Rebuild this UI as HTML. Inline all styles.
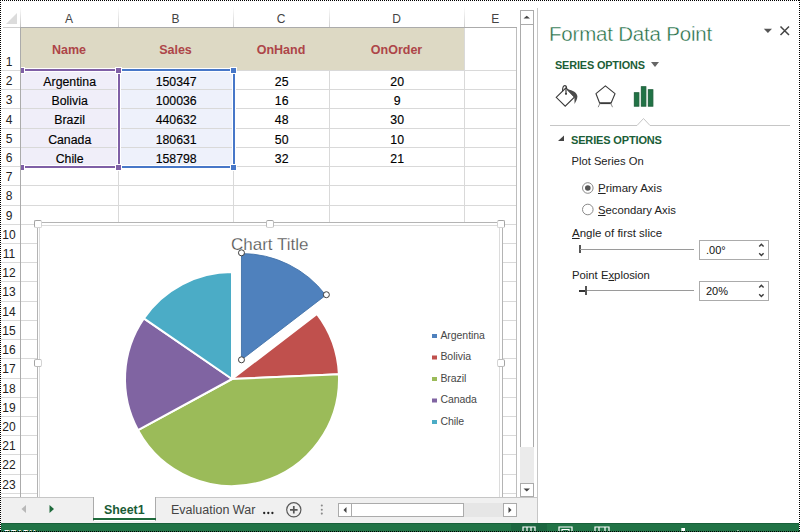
<!DOCTYPE html><html><head><meta charset="utf-8"><style>
*{margin:0;padding:0;box-sizing:border-box}
html,body{width:800px;height:532px;overflow:hidden;background:#fff}
body{position:relative;font-family:"Liberation Sans",sans-serif}
.a{position:absolute}
.t{position:absolute;white-space:nowrap;line-height:1}
</style></head><body>
<div class="a" style="left:21px;top:71px;width:97px;height:95px;background:#f0eef9"></div>
<div class="a" style="left:120px;top:71px;width:113px;height:95px;background:#eef1fb"></div>
<div class="a" style="left:20px;top:70.00px;width:496.0px;height:1px;background:#d9d9d9"></div>
<div class="a" style="left:20px;top:89.22px;width:496.0px;height:1px;background:#d9d9d9"></div>
<div class="a" style="left:20px;top:108.44px;width:496.0px;height:1px;background:#d9d9d9"></div>
<div class="a" style="left:20px;top:127.66px;width:496.0px;height:1px;background:#d9d9d9"></div>
<div class="a" style="left:20px;top:146.88px;width:496.0px;height:1px;background:#d9d9d9"></div>
<div class="a" style="left:20px;top:166.10px;width:496.0px;height:1px;background:#d9d9d9"></div>
<div class="a" style="left:20px;top:185.32px;width:496.0px;height:1px;background:#d9d9d9"></div>
<div class="a" style="left:20px;top:204.54px;width:496.0px;height:1px;background:#d9d9d9"></div>
<div class="a" style="left:20px;top:223.76px;width:496.0px;height:1px;background:#d9d9d9"></div>
<div class="a" style="left:20px;top:242.98px;width:496.0px;height:1px;background:#d9d9d9"></div>
<div class="a" style="left:20px;top:262.20px;width:496.0px;height:1px;background:#d9d9d9"></div>
<div class="a" style="left:20px;top:281.42px;width:496.0px;height:1px;background:#d9d9d9"></div>
<div class="a" style="left:20px;top:300.64px;width:496.0px;height:1px;background:#d9d9d9"></div>
<div class="a" style="left:20px;top:319.86px;width:496.0px;height:1px;background:#d9d9d9"></div>
<div class="a" style="left:20px;top:339.08px;width:496.0px;height:1px;background:#d9d9d9"></div>
<div class="a" style="left:20px;top:358.30px;width:496.0px;height:1px;background:#d9d9d9"></div>
<div class="a" style="left:20px;top:377.52px;width:496.0px;height:1px;background:#d9d9d9"></div>
<div class="a" style="left:20px;top:396.74px;width:496.0px;height:1px;background:#d9d9d9"></div>
<div class="a" style="left:20px;top:415.96px;width:496.0px;height:1px;background:#d9d9d9"></div>
<div class="a" style="left:20px;top:435.18px;width:496.0px;height:1px;background:#d9d9d9"></div>
<div class="a" style="left:20px;top:454.40px;width:496.0px;height:1px;background:#d9d9d9"></div>
<div class="a" style="left:20px;top:473.62px;width:496.0px;height:1px;background:#d9d9d9"></div>
<div class="a" style="left:20px;top:492.84px;width:496.0px;height:1px;background:#d9d9d9"></div>
<div class="a" style="left:118.00px;top:27px;width:1px;height:470px;background:#d9d9d9"></div>
<div class="a" style="left:233.00px;top:27px;width:1px;height:470px;background:#d9d9d9"></div>
<div class="a" style="left:329.00px;top:27px;width:1px;height:470px;background:#d9d9d9"></div>
<div class="a" style="left:464.00px;top:27px;width:1px;height:470px;background:#d9d9d9"></div>
<div class="a" style="left:516.00px;top:27px;width:1px;height:470px;background:#bdbdbd"></div>
<div class="a" style="left:21px;top:28px;width:443.00px;height:42px;background:#ddd9c4"></div>
<div class="a" style="left:118.00px;top:6px;width:1px;height:21px;background:linear-gradient(#fff,#d0d0d0)"></div>
<div class="a" style="left:233.00px;top:6px;width:1px;height:21px;background:linear-gradient(#fff,#d0d0d0)"></div>
<div class="a" style="left:329.00px;top:6px;width:1px;height:21px;background:linear-gradient(#fff,#d0d0d0)"></div>
<div class="a" style="left:464.00px;top:6px;width:1px;height:21px;background:linear-gradient(#fff,#d0d0d0)"></div>
<div class="a" style="left:20px;top:27px;width:497.0px;height:1px;background:#ababab"></div>
<div class="a" style="left:3px;top:27px;width:17px;height:1px;background:#cfcfcf"></div>
<svg class="a" style="left:0;top:0" width="20" height="27"><polygon points="17,13 17,24 6,24" fill="#dcdcdc"/></svg>
<div class="t" style="left:49.0px;width:40px;text-align:center;top:13px;font-size:12px;color:#444">A</div>
<div class="t" style="left:155.5px;width:40px;text-align:center;top:13px;font-size:12px;color:#444">B</div>
<div class="t" style="left:261.0px;width:40px;text-align:center;top:13px;font-size:12px;color:#444">C</div>
<div class="t" style="left:376.5px;width:40px;text-align:center;top:13px;font-size:12px;color:#444">D</div>
<div class="t" style="left:475.2px;width:40px;text-align:center;top:13px;font-size:12px;color:#444">E</div>
<div class="t" style="left:9.0px;width:120px;text-align:center;top:43.8px;font-size:12.5px;font-weight:bold;color:#ad4548">Name</div>
<div class="t" style="left:115.5px;width:120px;text-align:center;top:43.8px;font-size:12.5px;font-weight:bold;color:#ad4548">Sales</div>
<div class="t" style="left:221.0px;width:120px;text-align:center;top:43.8px;font-size:12.5px;font-weight:bold;color:#ad4548">OnHand</div>
<div class="t" style="left:336.5px;width:120px;text-align:center;top:43.8px;font-size:12.5px;font-weight:bold;color:#ad4548">OnOrder</div>
<div class="t" style="left:9.7px;width:120px;text-align:center;top:75.9px;font-size:12.3px;color:#000;-webkit-text-stroke:0.15px #000">Argentina</div>
<div class="t" style="left:116.2px;width:120px;text-align:center;top:75.9px;font-size:12.3px;color:#000;-webkit-text-stroke:0.15px #000">150347</div>
<div class="t" style="left:221.7px;width:120px;text-align:center;top:75.9px;font-size:12.3px;color:#000;-webkit-text-stroke:0.15px #000">25</div>
<div class="t" style="left:337.2px;width:120px;text-align:center;top:75.9px;font-size:12.3px;color:#000;-webkit-text-stroke:0.15px #000">20</div>
<div class="t" style="left:9.7px;width:120px;text-align:center;top:95.1px;font-size:12.3px;color:#000;-webkit-text-stroke:0.15px #000">Bolivia</div>
<div class="t" style="left:116.2px;width:120px;text-align:center;top:95.1px;font-size:12.3px;color:#000;-webkit-text-stroke:0.15px #000">100036</div>
<div class="t" style="left:221.7px;width:120px;text-align:center;top:95.1px;font-size:12.3px;color:#000;-webkit-text-stroke:0.15px #000">16</div>
<div class="t" style="left:337.2px;width:120px;text-align:center;top:95.1px;font-size:12.3px;color:#000;-webkit-text-stroke:0.15px #000">9</div>
<div class="t" style="left:9.7px;width:120px;text-align:center;top:114.4px;font-size:12.3px;color:#000;-webkit-text-stroke:0.15px #000">Brazil</div>
<div class="t" style="left:116.2px;width:120px;text-align:center;top:114.4px;font-size:12.3px;color:#000;-webkit-text-stroke:0.15px #000">440632</div>
<div class="t" style="left:221.7px;width:120px;text-align:center;top:114.4px;font-size:12.3px;color:#000;-webkit-text-stroke:0.15px #000">48</div>
<div class="t" style="left:337.2px;width:120px;text-align:center;top:114.4px;font-size:12.3px;color:#000;-webkit-text-stroke:0.15px #000">30</div>
<div class="t" style="left:9.7px;width:120px;text-align:center;top:133.6px;font-size:12.3px;color:#000;-webkit-text-stroke:0.15px #000">Canada</div>
<div class="t" style="left:116.2px;width:120px;text-align:center;top:133.6px;font-size:12.3px;color:#000;-webkit-text-stroke:0.15px #000">180631</div>
<div class="t" style="left:221.7px;width:120px;text-align:center;top:133.6px;font-size:12.3px;color:#000;-webkit-text-stroke:0.15px #000">50</div>
<div class="t" style="left:337.2px;width:120px;text-align:center;top:133.6px;font-size:12.3px;color:#000;-webkit-text-stroke:0.15px #000">10</div>
<div class="t" style="left:9.7px;width:120px;text-align:center;top:152.8px;font-size:12.3px;color:#000;-webkit-text-stroke:0.15px #000">Chile</div>
<div class="t" style="left:116.2px;width:120px;text-align:center;top:152.8px;font-size:12.3px;color:#000;-webkit-text-stroke:0.15px #000">158798</div>
<div class="t" style="left:221.7px;width:120px;text-align:center;top:152.8px;font-size:12.3px;color:#000;-webkit-text-stroke:0.15px #000">32</div>
<div class="t" style="left:337.2px;width:120px;text-align:center;top:152.8px;font-size:12.3px;color:#000;-webkit-text-stroke:0.15px #000">21</div>
<div class="a" style="left:21px;top:69px;width:99px;height:2px;background:#7f5fa6;box-shadow:0 0 0 1px #fff"></div>
<div class="a" style="left:21px;top:166px;width:99px;height:2px;background:#7f5fa6;box-shadow:0 0 0 1px #fff"></div>
<div class="a" style="left:118px;top:69px;width:2px;height:99px;background:#7f5fa6;box-shadow:0 0 0 1px #fff"></div>
<div class="a" style="left:121px;top:69px;width:114px;height:2px;background:#4777c8;box-shadow:0 0 0 1px #fff"></div>
<div class="a" style="left:121px;top:166px;width:114px;height:2px;background:#4777c8;box-shadow:0 0 0 1px #fff"></div>
<div class="a" style="left:233px;top:69px;width:2px;height:99px;background:#4777c8;box-shadow:0 0 0 1px #fff"></div>
<div class="a" style="left:118px;top:69px;width:2px;height:99px;background:#7f5fa6"></div>
<div class="a" style="left:18.0px;top:66.5px;width:7px;height:7px;background:#7f5fa6;border:1px solid #fff"></div>
<div class="a" style="left:115.0px;top:66.5px;width:7px;height:7px;background:#7f5fa6;border:1px solid #fff"></div>
<div class="a" style="left:18.0px;top:163.5px;width:7px;height:7px;background:#7f5fa6;border:1px solid #fff"></div>
<div class="a" style="left:115.0px;top:163.5px;width:7px;height:7px;background:#7f5fa6;border:1px solid #fff"></div>
<div class="a" style="left:230.0px;top:66.5px;width:7px;height:7px;background:#4777c8;border:1px solid #fff"></div>
<div class="a" style="left:230.0px;top:163.5px;width:7px;height:7px;background:#4777c8;border:1px solid #fff"></div>
<div class="a" style="left:0;top:28px;width:20px;height:469px;background:#fff"></div>
<div class="a" style="left:20px;top:27px;width:1px;height:470px;background:#ababab"></div>
<div class="a" style="left:20px;top:7px;width:1px;height:20px;background:linear-gradient(#fff,#c4c4c4)"></div>
<div class="a" style="left:0px;top:70.00px;width:20px;height:1px;background:#dadada"></div>
<div class="a" style="left:0px;top:89.22px;width:20px;height:1px;background:#dadada"></div>
<div class="a" style="left:0px;top:108.44px;width:20px;height:1px;background:#dadada"></div>
<div class="a" style="left:0px;top:127.66px;width:20px;height:1px;background:#dadada"></div>
<div class="a" style="left:0px;top:146.88px;width:20px;height:1px;background:#dadada"></div>
<div class="a" style="left:0px;top:166.10px;width:20px;height:1px;background:#dadada"></div>
<div class="a" style="left:0px;top:185.32px;width:20px;height:1px;background:#dadada"></div>
<div class="a" style="left:0px;top:204.54px;width:20px;height:1px;background:#dadada"></div>
<div class="a" style="left:0px;top:223.76px;width:20px;height:1px;background:#dadada"></div>
<div class="a" style="left:0px;top:242.98px;width:20px;height:1px;background:#dadada"></div>
<div class="a" style="left:0px;top:262.20px;width:20px;height:1px;background:#dadada"></div>
<div class="a" style="left:0px;top:281.42px;width:20px;height:1px;background:#dadada"></div>
<div class="a" style="left:0px;top:300.64px;width:20px;height:1px;background:#dadada"></div>
<div class="a" style="left:0px;top:319.86px;width:20px;height:1px;background:#dadada"></div>
<div class="a" style="left:0px;top:339.08px;width:20px;height:1px;background:#dadada"></div>
<div class="a" style="left:0px;top:358.30px;width:20px;height:1px;background:#dadada"></div>
<div class="a" style="left:0px;top:377.52px;width:20px;height:1px;background:#dadada"></div>
<div class="a" style="left:0px;top:396.74px;width:20px;height:1px;background:#dadada"></div>
<div class="a" style="left:0px;top:415.96px;width:20px;height:1px;background:#dadada"></div>
<div class="a" style="left:0px;top:435.18px;width:20px;height:1px;background:#dadada"></div>
<div class="a" style="left:0px;top:454.40px;width:20px;height:1px;background:#dadada"></div>
<div class="a" style="left:0px;top:473.62px;width:20px;height:1px;background:#dadada"></div>
<div class="a" style="left:0px;top:492.84px;width:20px;height:1px;background:#dadada"></div>
<div class="t" style="left:-1px;width:20px;text-align:center;top:55.8px;font-size:12px;color:#222">1</div>
<div class="t" style="left:-1px;width:20px;text-align:center;top:75.0px;font-size:12px;color:#222">2</div>
<div class="t" style="left:-1px;width:20px;text-align:center;top:94.2px;font-size:12px;color:#222">3</div>
<div class="t" style="left:-1px;width:20px;text-align:center;top:113.5px;font-size:12px;color:#222">4</div>
<div class="t" style="left:-1px;width:20px;text-align:center;top:132.7px;font-size:12px;color:#222">5</div>
<div class="t" style="left:-1px;width:20px;text-align:center;top:151.9px;font-size:12px;color:#222">6</div>
<div class="t" style="left:-1px;width:20px;text-align:center;top:171.1px;font-size:12px;color:#222">7</div>
<div class="t" style="left:-1px;width:20px;text-align:center;top:190.3px;font-size:12px;color:#222">8</div>
<div class="t" style="left:-1px;width:20px;text-align:center;top:209.6px;font-size:12px;color:#222">9</div>
<div class="t" style="left:-1px;width:20px;text-align:center;top:228.8px;font-size:12px;color:#222">10</div>
<div class="t" style="left:-1px;width:20px;text-align:center;top:248.0px;font-size:12px;color:#222">11</div>
<div class="t" style="left:-1px;width:20px;text-align:center;top:267.2px;font-size:12px;color:#222">12</div>
<div class="t" style="left:-1px;width:20px;text-align:center;top:286.4px;font-size:12px;color:#222">13</div>
<div class="t" style="left:-1px;width:20px;text-align:center;top:305.7px;font-size:12px;color:#222">14</div>
<div class="t" style="left:-1px;width:20px;text-align:center;top:324.9px;font-size:12px;color:#222">15</div>
<div class="t" style="left:-1px;width:20px;text-align:center;top:344.1px;font-size:12px;color:#222">16</div>
<div class="t" style="left:-1px;width:20px;text-align:center;top:363.3px;font-size:12px;color:#222">17</div>
<div class="t" style="left:-1px;width:20px;text-align:center;top:382.5px;font-size:12px;color:#222">18</div>
<div class="t" style="left:-1px;width:20px;text-align:center;top:401.8px;font-size:12px;color:#222">19</div>
<div class="t" style="left:-1px;width:20px;text-align:center;top:421.0px;font-size:12px;color:#222">20</div>
<div class="t" style="left:-1px;width:20px;text-align:center;top:440.2px;font-size:12px;color:#222">21</div>
<div class="t" style="left:-1px;width:20px;text-align:center;top:459.4px;font-size:12px;color:#222">22</div>
<div class="t" style="left:-1px;width:20px;text-align:center;top:478.6px;font-size:12px;color:#222">23</div>
<div class="a" style="left:37px;top:222px;width:466px;height:282px;background:#fff;border:1px solid #b4b4b4"></div>
<div class="a" style="left:39px;top:225px;width:461px;height:276px;background:#fff;border:1px solid #dcdcdc"></div>
<div class="a" style="left:34px;top:219.5px;width:8px;height:8px;background:#fff;border:1px solid;border-color:#a4a4a4 #d4d4d4 #d4d4d4 #a4a4a4;border-radius:2px"></div>
<div class="a" style="left:266px;top:219.5px;width:8px;height:8px;background:#fff;border:1px solid;border-color:#a4a4a4 #bcbcbc #d4d4d4 #bcbcbc;border-radius:2px"></div>
<div class="a" style="left:497px;top:219.5px;width:8px;height:8px;background:#fff;border:1px solid;border-color:#a4a4a4 #a4a4a4 #d4d4d4 #d4d4d4;border-radius:2px"></div>
<div class="a" style="left:34px;top:359px;width:8px;height:8px;background:#fff;border:1px solid;border-color:#bcbcbc #d4d4d4 #bcbcbc #a4a4a4;border-radius:2px"></div>
<div class="a" style="left:497px;top:359px;width:8px;height:8px;background:#fff;border:1px solid;border-color:#bcbcbc #a4a4a4 #bcbcbc #d4d4d4;border-radius:2px"></div>
<div class="t" style="left:231px;top:236px;font-size:17px;color:#505050;-webkit-text-stroke:0.25px #fff">Chart Title</div>
<svg class="a" style="left:0;top:0" width="800" height="532"><path d="M241.47,359.81 L241.47,252.81 A106.2,106.2 0 0 1 326.39,294.71 Z" fill="#4f81bd" stroke="#4272a8" stroke-width="0.9" stroke-linejoin="round" transform="translate(241.47,359.81) scale(0.9925) translate(-241.47,-359.81)"/><path d="M232.00,379.00 L316.92,313.90 A107.0,107.0 0 0 1 338.90,374.29 Z" fill="#c0504d" stroke="#fff" stroke-width="2" stroke-linejoin="round"/><path d="M232.00,379.00 L338.90,374.29 A107.0,107.0 0 0 1 138.04,430.19 Z" fill="#9bbb59" stroke="#fff" stroke-width="2" stroke-linejoin="round"/><path d="M232.00,379.00 L138.04,430.19 A107.0,107.0 0 0 1 143.84,318.36 Z" fill="#8064a2" stroke="#fff" stroke-width="2" stroke-linejoin="round"/><path d="M232.00,379.00 L143.84,318.36 A107.0,107.0 0 0 1 232.00,272.00 Z" fill="#4bacc6" stroke="#fff" stroke-width="2" stroke-linejoin="round"/><circle cx="241.47" cy="359.81" r="3" fill="#fff" stroke="#3f3f3f" stroke-width="1"/><circle cx="241.47" cy="252.81" r="3" fill="#fff" stroke="#3f3f3f" stroke-width="1"/><circle cx="326.39" cy="294.71" r="3" fill="#fff" stroke="#3f3f3f" stroke-width="1"/><rect x="432" y="334.0" width="5" height="4" fill="#4f81bd"/><rect x="432" y="355.5" width="5" height="4" fill="#c0504d"/><rect x="432" y="377.0" width="5" height="4" fill="#9bbb59"/><rect x="432" y="398.5" width="5" height="4" fill="#8064a2"/><rect x="432" y="420.0" width="5" height="4" fill="#4bacc6"/></svg>
<div class="t" style="left:440.4px;top:329.7px;font-size:10.5px;letter-spacing:-0.05px;color:#474747">Argentina</div>
<div class="t" style="left:440.4px;top:351.2px;font-size:10.5px;letter-spacing:-0.05px;color:#474747">Bolivia</div>
<div class="t" style="left:440.4px;top:372.7px;font-size:10.5px;letter-spacing:-0.05px;color:#474747">Brazil</div>
<div class="t" style="left:440.4px;top:394.2px;font-size:10.5px;letter-spacing:-0.05px;color:#474747">Canada</div>
<div class="t" style="left:440.4px;top:415.7px;font-size:10.5px;letter-spacing:-0.05px;color:#474747">Chile</div>
<div class="a" style="left:517px;top:0;width:21px;height:497px;background:#fff"></div>
<div class="a" style="left:520px;top:10px;width:14px;height:15px;border:1px solid #ababab;background:#fff"></div>
<svg class="a" style="left:520px;top:10px" width="14" height="15"><polygon points="3.5,8.6 10,8.6 6.75,5.8" fill="#444"/></svg>
<div class="a" style="left:520px;top:24px;width:14px;height:424px;border:1px solid #ababab;background:#fff"></div>
<div class="a" style="left:520px;top:447px;width:14px;height:36px;background:#ebebeb"></div>
<div class="a" style="left:520px;top:483px;width:14px;height:14px;border:1px solid #ababab;background:#fff"></div>
<svg class="a" style="left:520px;top:483px" width="14" height="14"><polygon points="3.5,5.6 10,5.6 6.75,8.4" fill="#444"/></svg>
<div class="a" style="left:537px;top:8px;width:1px;height:515px;background:#c6c6c6"></div>
<div class="a" style="left:0;top:496.5px;width:537px;height:27px;background:#f0f0f0;border-top:1px solid #c6c6c6"></div>
<svg class="a" style="left:0;top:497px" width="90" height="26"><polygon points="26,8 26,16 21.5,12" fill="#b8b8b8"/><polygon points="49.5,8 49.5,16 54,12" fill="#1e6a3b"/></svg>
<div class="a" style="left:92.5px;top:496.5px;width:63px;height:24px;background:#fff;border-left:1px solid #ababab;border-right:1px solid #ababab"></div>
<div class="a" style="left:92.5px;top:518px;width:63px;height:2px;background:#1e6a3b"></div>
<div class="t" style="left:104px;top:503.5px;font-size:12.4px;font-weight:bold;color:#1a5c36">Sheet1</div>
<div class="t" style="left:171px;top:504px;font-size:12.5px;color:#444">Evaluation War</div>
<svg class="a" style="left:255px;top:498px" width="80" height="24"><circle cx="9.2" cy="15" r="1.15" fill="#222"/><circle cx="13.3" cy="15" r="1.15" fill="#222"/><circle cx="17.4" cy="15" r="1.15" fill="#222"/><circle cx="66.8" cy="7.5" r="1.05" fill="#8a8a8a"/><circle cx="66.8" cy="11.7" r="1.05" fill="#8a8a8a"/><circle cx="66.8" cy="15.6" r="1.05" fill="#8a8a8a"/></svg>
<svg class="a" style="left:284px;top:501px" width="20" height="20"><circle cx="9.8" cy="8.8" r="7.1" fill="none" stroke="#5a5a5a" stroke-width="1.2"/><path d="M9.8,5V12.6M6,8.8H13.6" stroke="#555" stroke-width="1.7"/></svg>
<div class="a" style="left:337.5px;top:503px;width:14px;height:14px;border:1px solid #ababab;background:#fff"></div>
<svg class="a" style="left:337.5px;top:503px" width="14" height="14"><polygon points="8.5,4 8.5,10 5.5,7" fill="#444"/></svg>
<div class="a" style="left:350.5px;top:503px;width:113.5px;height:14px;border:1px solid #ababab;background:#fff"></div>
<div class="a" style="left:464px;top:503px;width:38.5px;height:14px;background:#e6e6e6"></div>
<div class="a" style="left:502.5px;top:503px;width:14px;height:14px;border:1px solid #ababab;background:#fff"></div>
<svg class="a" style="left:502.5px;top:503px" width="14" height="14"><polygon points="5.5,4 5.5,10 8.5,7" fill="#444"/></svg>
<div class="a" style="left:0;top:522.5px;width:800px;height:10px;background:#217346;border-top:1px solid #19603a"></div>
<div class="a" style="left:511px;top:523.5px;width:36px;height:9px;background:#1c6640"></div>
<div class="t" style="left:4px;top:528.8px;font-size:9px;color:#fff;font-weight:bold">READY</div>
<svg class="a" style="left:0;top:523px" width="800" height="9"><path d="M523,9V4H535V9M527,4V9M531,4V9" stroke="#fff" fill="none" stroke-width="1.2"/><path d="M559,9V4H572V9M562,9V6.5H569V9" stroke="#fff" fill="none" stroke-width="1.2"/><path d="M595,9V4H609V9M599,4V9M605,4V9" stroke="#fff" fill="none" stroke-width="1.2"/><rect x="681.3" y="5" width="3.7" height="4" fill="#fff"/><path d="M736,8.5H740M738,7V9" stroke="#fff" stroke-width="1"/><path d="M760,8.5H764M762.5,8.5H766M768,8.5H772M774,8.5H777M779,8.5H781" stroke="#cfe3d6" stroke-width="1"/></svg>
<div class="t" style="left:549px;top:24.3px;font-size:20.5px;letter-spacing:-0.2px;color:#1d6b42;-webkit-text-stroke:0.4px #fff">Format Data Point</div>
<svg class="a" style="left:760px;top:24px" width="35" height="14"><polygon points="3.8,4.8 12,4.8 7.9,9.1" fill="#555"/><path d="M20.5,2.5L29,11M29,2.5L20.5,11" stroke="#444" stroke-width="1.5"/></svg>
<div class="t" style="left:555px;top:59.8px;font-size:10.9px;letter-spacing:-0.15px;font-weight:bold;color:#1b5e37">SERIES OPTIONS</div>
<svg class="a" style="left:648px;top:58px" width="14" height="12"><polygon points="3,4 11,4 7,9" fill="#666"/></svg>
<svg class="a" style="left:550px;top:82px" width="110" height="30"><path d="M6.2,15.3 L16,5.8 L24.6,15 L15.2,24.2 Z" fill="none" stroke="#3a3a3a" stroke-width="1.1" stroke-linejoin="miter"/><path d="M12.6,9.4 C12.4,5.6 13.4,3.6 14.7,3.6 C15.8,3.6 16.6,4.6 16.6,6" fill="none" stroke="#3a3a3a" stroke-width="1.1"/><path d="M16,6 V11.6" stroke="#3a3a3a" stroke-width="1.2"/><circle cx="16" cy="11.8" r="1.1" fill="#3a3a3a"/><path d="M17.6,7.2 C22.5,8.2 27.4,10.5 27.4,14.6 C27.4,17.5 25.6,20 24.6,22.1 L24.4,15.2 L17.2,8.2 Z" fill="#4a4a4a"/><polygon points="55.4,3.8 65,11.7 61,21.2 49.7,21.2 46,11.7" fill="none" stroke="#3a3a3a" stroke-width="1.1" stroke-linejoin="round"/><path d="M49.7,21.2 H61" stroke="#3a3a3a" stroke-width="1.8"/><path d="M49.9,21.4 L48.2,25.2 M60.8,21.4 L62.5,25.2" stroke="#8a8a8a" stroke-width="1"/><rect x="84.3" y="10.7" width="4.6" height="13.5" fill="#217346" stroke="#1b5e38" stroke-width="0.9"/><rect x="91.3" y="4.7" width="4.6" height="19.5" fill="#217346" stroke="#1b5e38" stroke-width="0.9"/><rect x="98.3" y="7.7" width="4.6" height="16.5" fill="#217346" stroke="#1b5e38" stroke-width="0.9"/></svg>
<svg class="a" style="left:545px;top:112px" width="250" height="16"><path d="M5,13.5 H92 L98.5,6.5 L105,13.5 H245" fill="none" stroke="#c6c6c6" stroke-width="1"/></svg>
<svg class="a" style="left:555px;top:133px" width="12" height="10"><polygon points="3,8 9,8 9,2.5" fill="#444"/></svg>
<div class="t" style="left:571px;top:134.7px;font-size:11px;letter-spacing:-0.15px;font-weight:bold;color:#1b5e37">SERIES OPTIONS</div>
<div class="t" style="left:571.5px;top:155.7px;font-size:11.2px;color:#222">Plot Series On</div>
<svg class="a" style="left:576px;top:176px" width="24" height="45"><circle cx="11.8" cy="12" r="5.3" fill="#fff" stroke="#8a8a8a" stroke-width="1"/><circle cx="11.8" cy="12" r="2.8" fill="#555"/><circle cx="11.8" cy="33.5" r="5.3" fill="#fff" stroke="#8a8a8a" stroke-width="1"/></svg>
<div class="t" style="left:598px;top:183px;font-size:11.5px;color:#222"><u>P</u>rimary Axis</div>
<div class="t" style="left:598px;top:204.5px;font-size:11.3px;color:#222"><u>S</u>econdary Axis</div>
<div class="t" style="left:572px;top:228px;font-size:11.5px;color:#222"><u>A</u>ngle of first slice</div>
<div class="a" style="left:579px;top:245px;width:2px;height:8px;background:#555"></div>
<div class="a" style="left:580px;top:249px;width:114px;height:1px;background:#9a9a9a"></div>
<div class="t" style="left:572px;top:270px;font-size:11.3px;color:#222">Point E<u>x</u>plosion</div>
<div class="a" style="left:579px;top:290px;width:6px;height:1.5px;background:#333"></div>
<div class="a" style="left:585px;top:286px;width:2px;height:9px;background:#555"></div>
<div class="a" style="left:587px;top:290px;width:107px;height:1px;background:#9a9a9a"></div>
<div class="a" style="left:699px;top:240.3px;width:70px;height:19.5px;border:1px solid #ababab;background:#fff"></div>
<div class="t" style="left:706px;top:245.3px;font-size:11px;color:#111">.00°</div>
<svg class="a" style="left:755px;top:240.3px" width="14" height="20"><path d="M4.2,6.6 L6.4,4.3 L8.6,6.6 M4.2,13.2 L6.4,15.5 L8.6,13.2" fill="none" stroke="#3a3a3a" stroke-width="1.4"/></svg>
<div class="a" style="left:699px;top:281.3px;width:70px;height:19.5px;border:1px solid #ababab;background:#fff"></div>
<div class="t" style="left:706px;top:286.3px;font-size:11px;color:#111">20%</div>
<svg class="a" style="left:755px;top:281.3px" width="14" height="20"><path d="M4.2,6.6 L6.4,4.3 L8.6,6.6 M4.2,13.2 L6.4,15.5 L8.6,13.2" fill="none" stroke="#3a3a3a" stroke-width="1.4"/></svg>
<div class="a" style="left:0;top:0;width:800px;height:1px;background:repeating-linear-gradient(90deg,#000 0 1px,#fff 1px 2px)"></div>
<div class="a" style="left:0;top:0;width:1px;height:532px;background:repeating-linear-gradient(180deg,#000 0 1px,#fff 1px 2px)"></div>
<div class="a" style="left:799px;top:0;width:1px;height:532px;background:repeating-linear-gradient(180deg,#000 0 1px,#fff 1px 2px)"></div>
<div class="a" style="left:0;top:531px;width:800px;height:1px;background:repeating-linear-gradient(90deg,#000 0 1px,#2a7a4e 1px 2px)"></div>
</body></html>
